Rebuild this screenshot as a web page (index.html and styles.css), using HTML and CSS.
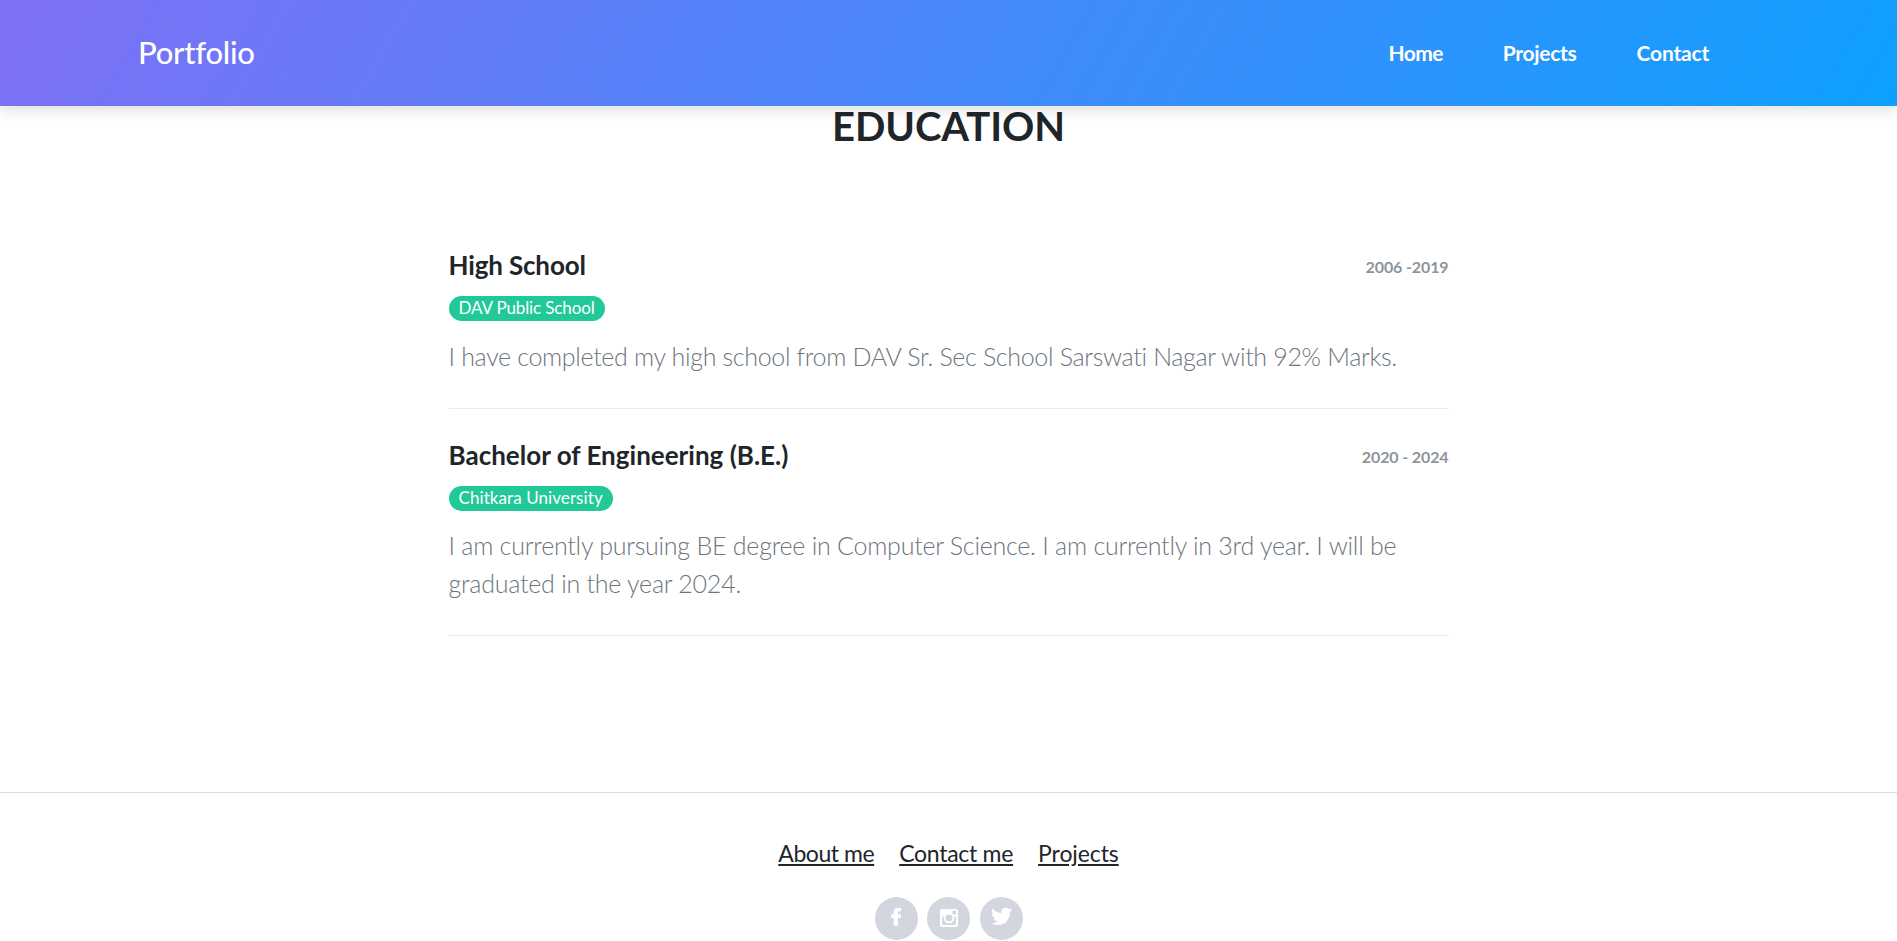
FILE: index.html
```html
<!DOCTYPE html>
<html lang="en">
<head>
<meta charset="utf-8">
<title>Portfolio</title>
<link rel="stylesheet" href="styles.css">
</head>
<body>
<header class="navbar">
  <a class="brand">Portfolio</a>
  <nav class="nav"><a class="nav-home">Home</a><a class="nav-projects">Projects</a><a class="nav-contact">Contact</a></nav>
</header>
<main class="education">
  <h2 class="title">EDUCATION</h2>
  <section class="item">
    <div class="row"><h3 class="degree degree-school">High School</h3><span class="period">2006 -2019</span></div>
    <span class="badge badge-school">DAV Public School</span>
    <p class="text text-first">I have completed my high school from DAV Sr. Sec School Sarswati Nagar with 92% Marks.</p>
  </section>
  <section class="item">
    <div class="row"><h3 class="degree">Bachelor of Engineering (B.E.)</h3><span class="period">2020 - 2024</span></div>
    <span class="badge badge-university">Chitkara University</span>
    <p class="text text-second">I am currently pursuing BE degree in Computer Science. I am currently in 3rd year. I will be graduated in the year 2024.</p>
  </section>
</main>
<footer class="footer">
  <div class="links"><a class="link link-about">About me</a><a class="link link-contact">Contact me</a><a class="link">Projects</a></div>
  <div class="social">
    <a class="icon"><svg viewBox="0 0 43 43"><path d="M18.6 28.8V20.9H16V17.6H18.6V15.2C18.6 12.2 20.2 10.9 22.8 10.9H26V14.3H24.2C23.3 14.3 23 14.7 23 15.5V17.6H26L25.6 20.9H23V28.8Z"/></svg></a>
    <a class="icon"><svg viewBox="0 0 43 43"><path fill-rule="evenodd" d="M14.8 12H29.2A1.8 1.8 0 0 1 31 13.800V28.200A1.800 1.800 0 0 1 29.200 30H14.800A1.800 1.800 0 0 1 13 28.200V13.800A1.800 1.800 0 0 1 14.800 12ZM26.200 13.600a.7.7 0 0 0-.7.700v2.500c0 .4.300.7.700.7h2.200c.4 0 .7-.3.700-.7v-2.500a.7.7 0 0 0-.7-.7ZM15 19.500V27.200C15 27.700 15.400 28 15.800 28H28.200C28.700 28 29 27.700 29 27.200V19.500H27.100C27.300 20 27.400 20.600 27.400 21.100A5.400 5.200 0 0 1 16.600 21.100C16.600 20.600 16.700 20 16.900 19.500ZM22 17.500a3.500 3.400 0 1 0 0 6.800 3.500 3.400 0 0 0 0-6.800Z"/></svg></a>
    <a class="icon"><svg viewBox="0 0 43 43"><path d="M32.200 12.800c-.8.300-1.600.6-2.500.7.900-.5 1.600-1.400 1.900-2.400-.8.500-1.800.8-2.700 1a4.350 4.350 0 0 0-7.500 3.900c-3.500-.2-6.800-1.900-8.900-4.500-1.200 2-.6 4.500 1.300 5.800-.7 0-1.400-.2-1.900-.5 0 2.200 1.500 4 3.500 4.400-.6.100-1.300.2-2 .1.600 1.700 2.200 3 4.100 3a8.800 8.800 0 0 1-6.400 1.800 12.300 12.300 0 0 0 6.700 2c8 0 12.400-6.600 12.200-12.900.9-.6 1.600-1.400 2.200-2.400Z"/></svg></a>
  </div>
</footer>
</body>
</html>
```
FILE: styles.css
```css
* { box-sizing: border-box; }
html, body { height: 100%; }
body {
  margin: 0;
  overflow: hidden;
  background: #fff;
  color: #212529;
  font-family: Lato, sans-serif;
}
.navbar {
  position: relative;
  z-index: 1;
  display: flex;
  align-items: center;
  justify-content: space-between;
  height: 106px;
  padding: 0 188px 0 138px;
  color: #fff;
  background: linear-gradient(120deg, #7f70f5, #0ea0ff);
  box-shadow: 0 4px 14px rgba(0, 0, 0, 0.13);
}
.brand { padding-bottom: 3px; font-size: 31px; font-weight: 500; letter-spacing: -0.25px; }
.nav { display: flex; gap: 60px; padding-bottom: 2px; font-size: 21px; font-weight: 700; }
.nav-home { letter-spacing: -0.6px; }
.nav-projects { letter-spacing: -0.3px; }
.nav-contact { letter-spacing: -0.2px; }
.education { width: 1000px; margin: 0 auto; height: 686px; }
.title {
  margin: 0 0 98px;
  font-size: 40px;
  line-height: 40px;
  font-weight: 700;
  letter-spacing: -0.05px;
  text-align: center;
}
.item { border-bottom: 1px solid #ebebeb; height: 165px; }
.item + .item { padding-top: 25px; height: 227px; }
.row { display: flex; justify-content: space-between; height: 44px; }
.degree { margin: 0; font-size: 26px; line-height: 42px; font-weight: 700; letter-spacing: 0.01px; }
.degree-school { letter-spacing: -0.15px; }
.period { font-size: 16px; line-height: 46px; font-weight: 700; letter-spacing: -0.12px; color: #8d949b; }
.badge {
  display: block;
  width: fit-content;
  height: 25px;
  margin-top: 8px;
  padding: 0 10px;
  border-radius: 13px;
  background: #22c998;
  color: #fff;
  font-size: 17px;
  line-height: 23px;
}
.badge-school { letter-spacing: -0.12px; }
.badge-university { letter-spacing: 0.08px; }
.text {
  margin: 17px 0 0;
  font-size: 25px;
  line-height: 37.5px;
  font-weight: 300;
  color: #6c757d;
}
.text-first { letter-spacing: -0.33px; }
.text-second { margin-top: 16px; letter-spacing: -0.24px; }
.footer { height: 149px; border-top: 1px solid #dcdcdc; }
.links { display: flex; justify-content: center; gap: 25px; margin-top: 42px; }
.link { font-size: 23px; line-height: 36px; text-decoration: underline; letter-spacing: -0.1px; }
.link-about { letter-spacing: -0.45px; }
.link-contact { letter-spacing: -0.28px; }
.social { display: flex; justify-content: center; gap: 9.5px; margin-top: 26px; }
.icon { width: 43px; height: 43px; border-radius: 50%; background: #d3d6df; }
.icon svg { display: block; width: 43px; height: 43px; fill: #fff; }
```
